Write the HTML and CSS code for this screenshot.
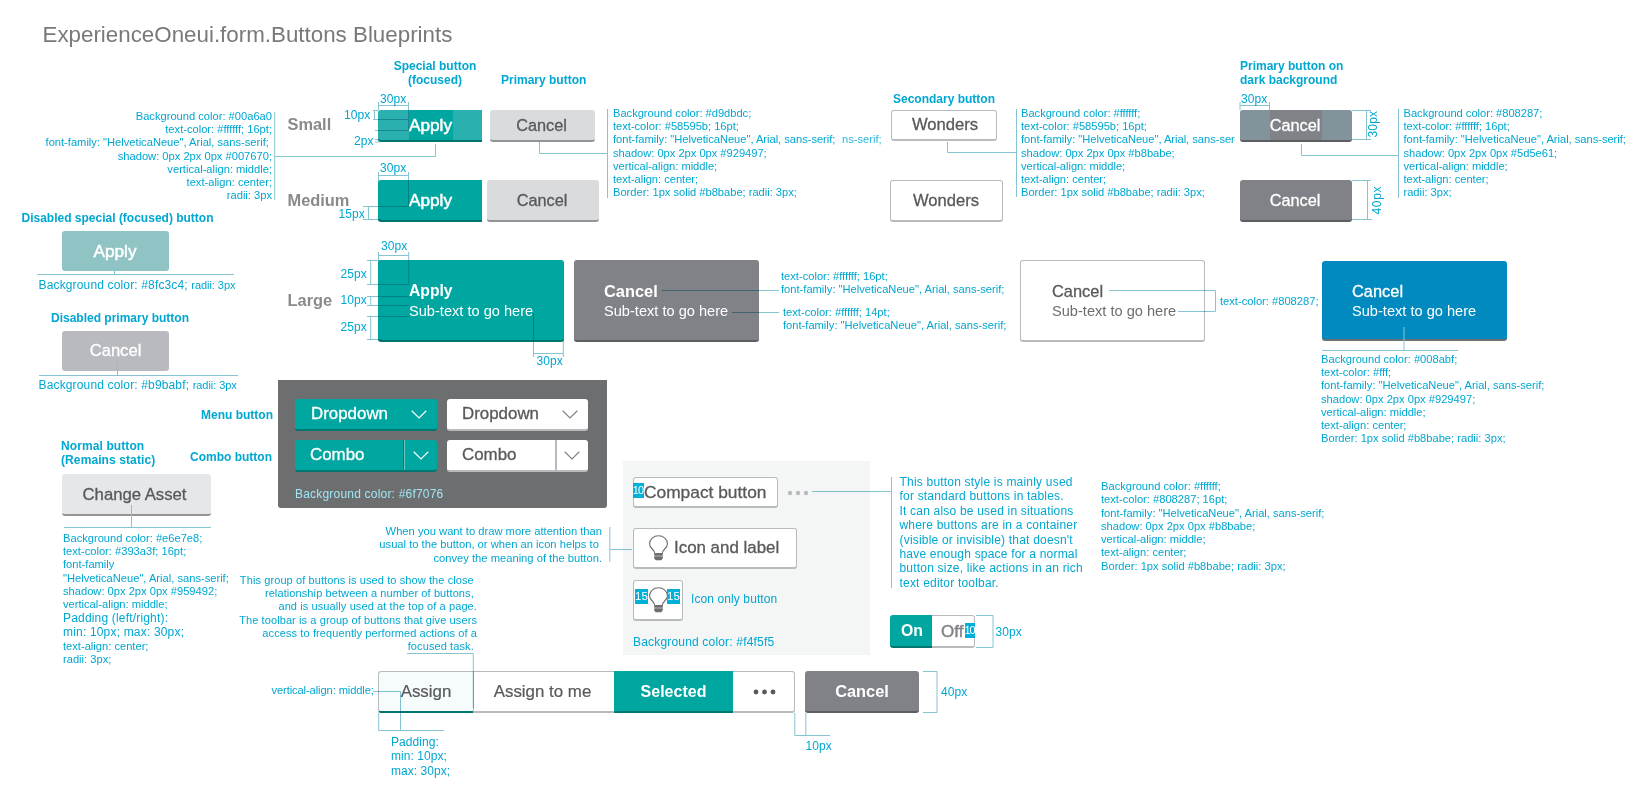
FILE: index.html
```html
<!DOCTYPE html>
<html lang="en">
<head>
<meta charset="utf-8">
<title>ExperienceOneui.form.Buttons Blueprints</title>
<link rel="stylesheet" href="styles.css">
</head>
<body>
<main class="board">
  <h1 class="title">ExperienceOneui.form.Buttons Blueprints</h1>

  <!-- Headings -->
  <h2 class="head h-special">Special button<br>(focused)</h2>
  <h2 class="head h-primary">Primary button</h2>
  <h2 class="head h-secondary">Secondary button</h2>
  <h2 class="head h-dark">Primary button on<br>dark background</h2>
  <h2 class="head h-dis-special">Disabled special (focused) button</h2>
  <h2 class="head h-dis-primary">Disabled primary button</h2>
  <h2 class="head h-menu">Menu button</h2>
  <h2 class="head h-combo">Combo button</h2>
  <h2 class="head h-normal">Normal button<br>(Remains static)</h2>
  <div class="size s-small">Small</div>
  <div class="size s-medium">Medium</div>
  <div class="size s-large">Large</div>

  <!-- Small buttons -->
  <div class="btn teal b-apply-s"><i class="pad pad-l"></i><span>Apply</span><i class="pad pad-r"></i></div>
  <div class="btn grey b-cancel-s">Cancel</div>
  <div class="btn white b-wonders-s">Wonders</div>
  <div class="btn dark b-dark-s"><i class="pad pad-l"></i><span>Cancel</span><i class="pad pad-r"></i></div>

  <!-- Medium buttons -->
  <div class="btn teal b-apply-m">Apply</div>
  <div class="btn grey b-cancel-m">Cancel</div>
  <div class="btn white b-wonders-m">Wonders</div>
  <div class="btn dark b-dark-m">Cancel</div>

  <!-- Large buttons -->
  <div class="large teal l-apply"><b>Apply</b><span>Sub-text to go here</span></div>
  <div class="large dark l-cancel"><b>Cancel</b><span>Sub-text to go here</span></div>
  <div class="large white l-white"><em>Cancel</em><span>Sub-text to go here</span></div>
  <div class="large blue l-blue"><em>Cancel</em><span>Sub-text to go here</span></div>

  <!-- Disabled and static buttons -->
  <div class="btn dis-teal b-dis-apply">Apply</div>
  <div class="btn dis-grey b-dis-cancel">Cancel</div>
  <div class="btn static b-change">Change Asset</div>

  <!-- Menu and combo buttons -->
  <section class="menus">
    <div class="menu-grid">
      <div class="menu teal"><span>Dropdown</span><svg class="chev" viewBox="0 0 16 9"><path d="M.7.8 8 7.9 15.3.8"/></svg></div>
      <div class="menu plain"><span>Dropdown</span><svg class="chev" viewBox="0 0 16 9"><path d="M.7.8 8 7.9 15.3.8"/></svg></div>
      <div class="menu combo teal"><span>Combo</span><svg class="chev" viewBox="0 0 16 9"><path d="M.7.8 8 7.9 15.3.8"/></svg></div>
      <div class="menu combo plain"><span>Combo</span><svg class="chev" viewBox="0 0 16 9"><path d="M.7.8 8 7.9 15.3.8"/></svg></div>
    </div>
    <p class="mid menus-note">Background color: #6f7076</p>
  </section>

  <!-- Compact and icon buttons -->
  <section class="compacts">
    <div class="compact-row">
      <div class="outline o-compact"><i class="tag t10">10</i>Compact button</div>
      <svg class="dots" viewBox="0 0 22 6"><circle cx="3" cy="3" r="2.2"/><circle cx="11" cy="3" r="2.2"/><circle cx="19" cy="3" r="2.2"/></svg>
    </div>
    <div class="outline o-icon">
      <svg class="bulb" viewBox="0 0 19 26"><path class="glass" d="M5.600 18.500C5.600 14 .600 13.500.600 8.900.600 4.200 4.500.700 9.500.700S18.400 4.200 18.400 8.900C18.400 13.500 13.400 14 13.400 18.500"/><path class="cap" d="M5.200 18h8.600v2.800H5.200zM5.200 21.300h8.600v2.200l-1.600 1.700H6.800l-1.600-1.700z"/></svg>
      <span>Icon and label</span>
    </div>
    <div class="only-row">
      <div class="outline o-only">
        <i class="tag t15a">15</i>
        <svg class="bulb" viewBox="0 0 19 26"><path class="glass" d="M5.600 18.500C5.600 14 .600 13.500.600 8.900.600 4.200 4.500.700 9.500.700S18.400 4.200 18.400 8.900C18.400 13.500 13.400 14 13.400 18.500"/><path class="cap" d="M5.200 18h8.600v2.800H5.200zM5.200 21.300h8.600v2.200l-1.600 1.700H6.800l-1.600-1.700z"/></svg>
        <i class="tag t15b">15</i>
      </div>
      <p class="mid">Icon only button</p>
    </div>
    <p class="mid compacts-note">Background color: #f4f5f5</p>
  </section>

  <!-- Toggle -->
  <div class="toggle">
    <div class="on">On</div>
    <div class="off">Off<i class="tag t-off">10</i></div>
  </div>

  <!-- Toolbar -->
  <div class="toolbar">
    <div class="group">
      <div class="seg seg-assign">Assign</div>
      <div class="seg seg-me">Assign to me</div>
      <div class="seg seg-selected">Selected</div>
      <div class="seg seg-more"><svg class="more" viewBox="0 0 23 6"><circle cx="3" cy="3" r="2.400"/><circle cx="11.500" cy="3" r="2.400"/><circle cx="20" cy="3" r="2.400"/></svg></div>
    </div>
    <div class="btn dark tb-cancel">Cancel</div>
  </div>

  <!-- Specification notes -->
  <p class="note right n-special">Background color: #00a6a0
text-color: #ffffff; 16pt;
font-family: "HelveticaNeue", Arial, sans-serif; 
shadow: 0px 2px 0px #007670;
vertical-align: middle;
text-align: center;
radii: 3px</p>
  <p class="note n-primary">Background color: #d9dbdc;
text-color: #58595b; 16pt;
font-family: "HelveticaNeue", Arial, sans-serif;
shadow: 0px 2px 0px #929497;
vertical-align: middle;
text-align: center;
Border: 1px solid #b8babe; radii: 3px;</p>
  <p class="note n-stray">ns-serif;</p>
  <p class="note n-secondary">Background color: #ffffff;
text-color: #58595b; 16pt;
font-family: "HelveticaNeue", Arial, sans-ser
shadow: 0px 2px 0px #b8babe;
vertical-align: middle;
text-align: center;
Border: 1px solid #b8babe; radii: 3px;</p>
  <p class="note n-dark">Background color: #808287;
text-color: #ffffff; 16pt;
font-family: "HelveticaNeue", Arial, sans-serif;
shadow: 0px 2px 0px #5d5e61;
vertical-align: middle;
text-align: center;
radii: 3px;</p>
  <p class="note n-large-a">text-color: #ffffff; 16pt;
font-family: "HelveticaNeue", Arial, sans-serif;</p>
  <p class="note n-large-b">text-color: #ffffff; 14pt;
font-family: "HelveticaNeue", Arial, sans-serif;</p>
  <p class="note n-large-c">text-color: #808287;</p>
  <p class="note n-blue">Background color: #008abf;
text-color: #fff;
font-family: "HelveticaNeue", Arial, sans-serif;
shadow: 0px 2px 0px #929497;
vertical-align: middle;
text-align: center;
Border: 1px solid #b8babe; radii: 3px;</p>
  <p class="mid n-dis-a">Background color: #8fc3c4; <small>radii: 3px</small></p>
  <p class="mid n-dis-b">Background color: #b9babf; <small>radii: 3px</small></p>
  <div class="n-change">
    <p class="note-in">Background color: #e6e7e8;
text-color: #393a3f; 16pt;
font-family
"HelveticaNeue", Arial, sans-serif;
shadow: 0px 2px 0px #959492;
vertical-align: middle;</p>
    <p class="mid">Padding (left/right):<br>min: 10px; max: 30px;</p>
    <p class="note-in">text-align: center;
radii: 3px;</p>
  </div>
  <p class="note prose right n-icon">When you want to draw more attention than
usual to the button, or when an icon helps to 
convey the meaning of the button.</p>
  <p class="note prose right n-group">This group of buttons is used to show the close 
relationship between a number of buttons, 
and is usually used at the top of a page.
The toolbar is a group of buttons that give users
access to frequently performed actions of a
focused task. </p>
  <p class="mid n-compact">This button style is mainly used
for standard buttons in tables.
It can also be used in situations
where buttons are in a container
(visible or invisible) that doesn't
have enough space for a normal
button size, like actions in an rich
text editor toolbar.</p>
  <p class="note n-compact-spec">Background color: #ffffff;
text-color: #808287; 16pt;
font-family: "HelveticaNeue", Arial, sans-serif;
shadow: 0px 2px 0px #b8babe;
vertical-align: middle;
text-align: center;
Border: 1px solid #b8babe; radii: 3px;</p>
  <p class="note n-valign">vertical-align: middle;</p>
  <p class="mid n-padding">Padding:
min: 10px;
max: 30px;</p>

  <!-- Measurements -->
  <span class="dim d1">30px</span><span class="dim d2">10px</span><span class="dim d3">2px</span>
  <span class="dim d4">30px</span><span class="dim d5">15px</span><span class="dim d6">30px</span>
  <span class="dim d7">25px</span><span class="dim d8">10px</span><span class="dim d9">25px</span>
  <span class="dim d10">30px</span><span class="dim d11">30px</span>
  <span class="dim up d12">30px</span><span class="dim up d13">40px</span>
  <span class="dim d14">30px</span><span class="dim d15">40px</span><span class="dim d16">10px</span>

  <!-- Guide lines -->
  <svg class="guides tint" viewBox="0 0 1629 809">
    <path d="M274.700 112V200M275 156.500H435.500V144"/>
    <path d="M378.500 102V110M408.500 102V130.500M378 105.500H409M373 110.500H378M373 119.500H409M374.500 110V120M375 130.500H409M375 139.500H380M375 142H380"/>
    <path d="M378.500 172V181M408.500 172V206.500M378 175.500H409M363 206.500H409M363 219.500H381M368.500 206V220"/>
    <path d="M378.500 252V262M408.700 252V284.500M378 255.500H409M367 260.500H380M367 284.500H409M367 296.500H409M367 305.500H409M367 316.500H409M367 339.500H382M370.700 260V285M370.700 296V306M370.700 316V340"/>
    <path d="M533.500 313V357M563.300 339V357M533 353.500H563"/>
    <path d="M607.500 109V198M539.500 142V153.500H607"/>
    <path d="M1016.500 109V197M947.500 142V152.500H1016"/>
    <path d="M1398.500 109V198M1301.500 144V155.500H1398"/>
    <path d="M1240 102V110M1269.500 102V110M1240 105.500H1270"/>
    <path d="M1352 110.500H1371M1352 139.500H1371M1366.500 110V140M1352 180.500H1371M1352 219.500H1372M1367.500 180V220"/>
    <path d="M662 290.500H779M732 312.500H779M1109 290.500H1215.500V311.500H1178"/>
    <path d="M891.500 477V588M812 491.500H891M609.800 527V562M610 549.500H632"/>
    <path d="M407 653.500H473.300V708M373 691.500H401M400.500 691V730M378.700 713V730.500H444"/>
    <path d="M794.800 713V735.500H830M805.800 713V735M976 615.500H993V647.500H976M923 671.500H937V712.500H923"/>
  </svg>
  <svg class="guides" viewBox="0 0 1629 809">
    <path d="M37.500 274.500H234M114.500 268V274M39 375.500H238M117.500 361V375M64 527.500H211M131.500 505V527M1322 350.500H1458M1404 327V350"/>
  </svg>
</main>
</body>
</html>
```
FILE: styles.css
```css
body { margin: 0; background: #fff; font-family: "Liberation Sans", Arial, sans-serif; color: #00a7d1; }
h1, h2, p { margin: 0; }
i, em { font-style: normal; }
.board { position: relative; width: 1629px; height: 809px; overflow: hidden; }

/* Everything that is pinned on the canvas */
.title, .head, .size, .board > .btn, .large, .menus, .compacts, .toggle, .toolbar,
.note, .board > .mid, .n-change, .dim, .guides { position: absolute; }

.title { left: 42.500px; top: 22px; font-size: 22.350px; font-weight: 400; line-height: 25px; color: #797979; white-space: nowrap; }

.head { font-size: 12px; font-weight: 700; line-height: 14px; white-space: nowrap; }
.h-special { left: 385px; top: 59px; width: 100px; text-align: center; }
.h-primary { left: 501px; top: 73px; }
.h-secondary { left: 893px; top: 92px; }
.h-dark { left: 1240px; top: 59px; }
.h-dis-special { left: 21.500px; top: 211px; }
.h-dis-primary { left: 51px; top: 311px; }
.h-menu { left: 201px; top: 408px; }
.h-combo { left: 190px; top: 450px; }
.h-normal { left: 61px; top: 439px; letter-spacing: .1px; }

.size { left: 287.500px; font-size: 16.400px; font-weight: 700; line-height: 20px; color: #8a8a8a; }
.s-small { top: 114px; }
.s-medium { top: 190px; }
.s-large { top: 290px; }

/* Colour schemes */
.teal { background: #00a6a0; color: #fff; --edge: #007670; }
.grey { background: #d9dbdc; color: #58595b; --edge: #929497; }
.dark { background: #808287; color: #fff; --edge: #5d5e61; }
.blue { background: #008abf; color: #fff; --edge: #6b7076; }
.plain { background: #fff; color: #58595b; --edge: #b8babe; }
.white { background: #fff; color: #58595b; --edge: #b8babe; border: 1px solid #b8babe; }
.static { background: #e6e7e8; color: #58595b; --edge: #959492; }
.dis-teal { background: #8fc3c4; color: #fff; --edge: transparent; }
.dis-grey { background: #b9babf; color: #fff; --edge: transparent; }

.btn, .large, .menu { box-sizing: border-box; border-bottom: 2px solid var(--edge); border-radius: 3px; }
.btn { display: flex; align-items: center; justify-content: center; font-size: 16.600px; white-space: nowrap; height: 32px; }
.btn, .menu, .large em, .o-compact, .o-icon { -webkit-text-stroke: .3px currentColor; }
.b-apply-s, .b-apply-m, .b-dis-apply { -webkit-text-stroke-width: .5px; }
.b-apply-s, .b-apply-m { left: 378px; width: 104px; border-radius: 3px 0 0 3px; justify-content: flex-start; padding-left: 31px; font-size: 17.200px; }
.b-apply-s { top: 110px; }
.b-apply-m { top: 180px; height: 42px; }
.b-cancel-s, .b-cancel-m, .b-dark-s, .b-dark-m { font-size: 16.300px; }
.b-cancel-s { left: 490px; top: 110px; width: 105px; padding-right: 2px; }
.b-cancel-m { left: 487px; top: 180px; width: 112px; height: 42px; padding-right: 2px; }
.b-wonders-s { left: 891px; top: 110px; width: 106px; height: 31px; padding-left: 2px; }
.b-wonders-m { left: 890px; top: 180px; width: 113px; height: 42px; padding-right: 1px; }
.b-dark-s { left: 1240px; top: 110px; width: 112px; padding-right: 2px; }
.b-dark-m { left: 1240px; top: 180px; width: 112px; height: 42px; padding-right: 2px; }
.b-dis-apply, .b-dis-cancel { left: 62px; width: 107px; height: 40px; border: 0; }
.b-dis-apply { top: 231px; font-size: 17.200px; padding-right: 1px; }
.b-dis-cancel { top: 331px; }
.b-change { left: 62px; top: 474px; width: 149px; height: 42px; padding: 1px 4px 0 0; font-size: 16.700px; }

/* Tinted strips that mark the inner padding */
.pad { position: absolute; top: 0; bottom: 0; background: rgba(141, 200, 214, .3); }
.pad-l { left: 0; width: 31px; }
.pad-r { right: 0; width: 29px; }
.dark .pad { background: rgba(141, 200, 214, .25); width: 30px; }

.large { width: 185px; height: 82px; top: 260px; padding: 21px 0 0 31px; display: flex; flex-direction: column; line-height: 20px; white-space: nowrap; }
.large b, .large em { font-size: 16.400px; }
.large em { font-weight: 400; }
.large span { font-size: 14.600px; }
.l-apply { left: 378px; width: 186px; }
.l-apply b { font-size: 15.700px; }
.l-cancel { left: 574px; padding-left: 30px; }
.l-white { left: 1020px; padding: 20px 0 0 31px; }
.l-white span { color: #6d6e70; }
.l-blue { left: 1322px; top: 261px; height: 80px; padding: 20px 0 0 30px; }

.menus { box-sizing: border-box; left: 278px; top: 380px; width: 329px; height: 128px; padding: 19px 17px; background: #6d6e70; border-radius: 0 0 3px 3px; }
.menu-grid { display: grid; grid-template-columns: 142px 141px; gap: 9px 10px; }
.menu { height: 32px; padding: 0 10px 0 16px; display: flex; align-items: center; justify-content: space-between; font-size: 16.900px; }
.menu.plain { padding-left: 15px; }
.menu.combo { padding: 0 8px 0 15px; background-image: linear-gradient(to right, var(--edge) 1px, #6fc7c4 1px); background-size: 2px 100%; background-position: 108px 0; background-repeat: no-repeat; }
.menu.combo.plain { background-image: linear-gradient(#b8babe, #b8babe); }
.chev { width: 16px; height: 9px; fill: none; stroke: currentColor; stroke-width: 1.200; }
.plain .chev { stroke: #808287; }
.menus-note.mid { margin-top: 15px; color: #9fe6f2; letter-spacing: .2px; }

.compacts { box-sizing: border-box; left: 623px; top: 461px; width: 247px; height: 194px; padding: 16px 10px; background: #f4f5f5; }
.compact-row, .only-row { display: flex; align-items: center; }
.outline { position: relative; box-sizing: border-box; display: flex; align-items: center; background: #fff; border: 1px solid #b8babe; border-bottom-width: 2px; border-radius: 3px; color: #58595b; white-space: nowrap; }
.o-compact { width: 145px; height: 31px; padding-left: 10px; font-size: 17.350px; line-height: 26px; }
.o-icon { width: 164px; height: 41px; margin-top: 20px; padding-left: 15px; gap: 6px; font-size: 16.900px; }
.o-only { width: 50px; height: 41px; justify-content: center; }
.only-row { margin-top: 11px; gap: 8px; }
.only-row .mid { letter-spacing: .1px; margin-top: -2px; }
.dots { width: 22px; height: 6px; margin-left: 9px; fill: #b8babe; }
.bulb { width: 19px; height: 26px; }
.glass { fill: none; stroke: #6d6e70; stroke-width: 1.100; }
.cap { fill: #6d6e70; }
.compacts-note.mid { margin-top: 14px; letter-spacing: .18px; }

/* Blue tags that lie over a button and give a distance */
.tag { position: absolute; height: 15px; background: #00b0d8; color: #fff; font-size: 11.500px; line-height: 15px; text-align: center; -webkit-text-stroke: 0; }
.t10 { left: -1px; top: 5px; width: 11px; font-size: 11px; letter-spacing: -.8px; text-indent: -1px; }
.t15a { left: 1px; top: 8px; width: 13px; }
.t15b { left: 33px; top: 8px; width: 13px; }
.t-off { right: -1px; top: 7px; width: 10px; font-size: 11px; letter-spacing: -1px; text-indent: -1px; }

.toggle { left: 890px; top: 615px; display: flex; line-height: 31px; }
.on, .off { position: relative; box-sizing: border-box; height: 33px; border-bottom: 2px solid #007670; }
.on { width: 42px; padding-left: 11px; background: #00a6a0; color: #fff; font-size: 15.800px; font-weight: 700; border-radius: 3px 0 0 3px; line-height: 32px; }
.off { width: 43px; padding-left: 9px; border: 1px solid #b8babe; border-bottom-width: 2px; border-left: 0; border-radius: 0 3px 3px 0; color: #808287; font-size: 17px; -webkit-text-stroke: .4px currentColor; }

.toolbar { left: 378px; top: 671px; display: flex; gap: 10px; }
.group { display: flex; box-sizing: border-box; width: 417px; height: 42px; }
.seg { box-sizing: border-box; display: flex; align-items: center; justify-content: center; border: 1px solid #b8babe; border-bottom-width: 2px; border-right: 0; font-size: 16.900px; color: #58595b; white-space: nowrap; -webkit-text-stroke: .2px currentColor; }
.seg-assign { width: 95px; background: #f6fcfc; border-bottom-color: #007670; border-radius: 3px 0 0 3px; }
.seg-me { width: 141px; padding-right: 3px; }
.seg-selected { width: 119px; background: #00a6a0; border-color: #00a6a0 #00a6a0 #007670; color: #fff; font-size: 16px; font-weight: 700; padding-right: 1px; -webkit-text-stroke: 0; }
.seg-more { width: 62px; border-right: 1px solid #b8babe; border-left: 0; border-radius: 0 3px 3px 0; padding-left: 2px; }
.more { width: 23px; height: 6px; fill: #58595b; }
.btn.tb-cancel { width: 114px; height: 42px; font-size: 16.400px; font-weight: 700; -webkit-text-stroke: 0; }

/* Notes */
.note, .note-in { font-size: 11.150px; line-height: 13.170px; white-space: pre; }
.note.prose { font-size: 11px; letter-spacing: .100px; }
.right { text-align: right; }
.mid { font-size: 12px; line-height: 14.400px; letter-spacing: .15px; white-space: nowrap; }
.mid small { font-size: 11px; letter-spacing: -.050px; }
.n-special { right: 1357px; top: 110px; }
.n-primary { left: 613px; top: 107px; }
.n-primary, .n-secondary, .n-dark { letter-spacing: -.02px; }
.n-stray { left: 842px; top: 133px; width: 42px; color: #2fb6da; }
.n-secondary { left: 1021px; top: 107px; }
.n-dark { left: 1403.500px; top: 107px; }
.n-large-a { left: 781px; top: 270px; }
.n-large-b { left: 783px; top: 306px; }
.n-large-c { left: 1220px; top: 295px; }
.n-blue { left: 1321px; top: 353px; }
.board > .n-dis-a { left: 38.500px; top: 278px; }
.board > .n-dis-b { left: 38.500px; top: 378px; }
.n-change { left: 63px; top: 532px; }
.n-change .mid { letter-spacing: .180px; }
.note.n-icon { right: 1027px; top: 525px; line-height: 13.400px; font-size: 11.200px; letter-spacing: 0; }
.n-group { right: 1152px; top: 574px; }
.board > .n-compact { left: 899.500px; top: 475px; white-space: pre; letter-spacing: .200px; line-height: 14.380px; }
.n-compact-spec { left: 1101px; top: 480px; line-height: 13.300px; }
.n-valign { left: 271.500px; top: 684px; letter-spacing: -.1px; }
.board > .n-padding { left: 391px; top: 735px; white-space: pre; letter-spacing: .05px; }

.dim { font-size: 12px; line-height: 14px; letter-spacing: .1px; }
.d1 { left: 380px; top: 92px; }
.d2 { left: 344px; top: 108px; }
.d3 { left: 354px; top: 134px; }
.d4 { left: 380px; top: 161px; }
.d5 { left: 338.500px; top: 207px; }
.d6 { left: 381px; top: 239px; }
.d7 { left: 340.500px; top: 267px; }
.d8 { left: 340.500px; top: 293px; }
.d9 { left: 340.500px; top: 320px; }
.d10 { left: 536.500px; top: 354px; }
.d11 { left: 1241px; top: 92px; }
.d14 { left: 995.500px; top: 625px; }
.d15 { left: 941px; top: 685px; }
.d16 { left: 805.500px; top: 739px; }
.up { writing-mode: vertical-rl; transform: rotate(180deg); }
.d12 { left: 1366px; top: 111px; }
.d13 { left: 1370px; top: 186px; letter-spacing: .6px; }

.guides { left: 0; top: 0; width: 1629px; height: 809px; }
.tint { mix-blend-mode: multiply; }
.guides path { fill: none; stroke: #86c4d2; stroke-width: 1; }
```
